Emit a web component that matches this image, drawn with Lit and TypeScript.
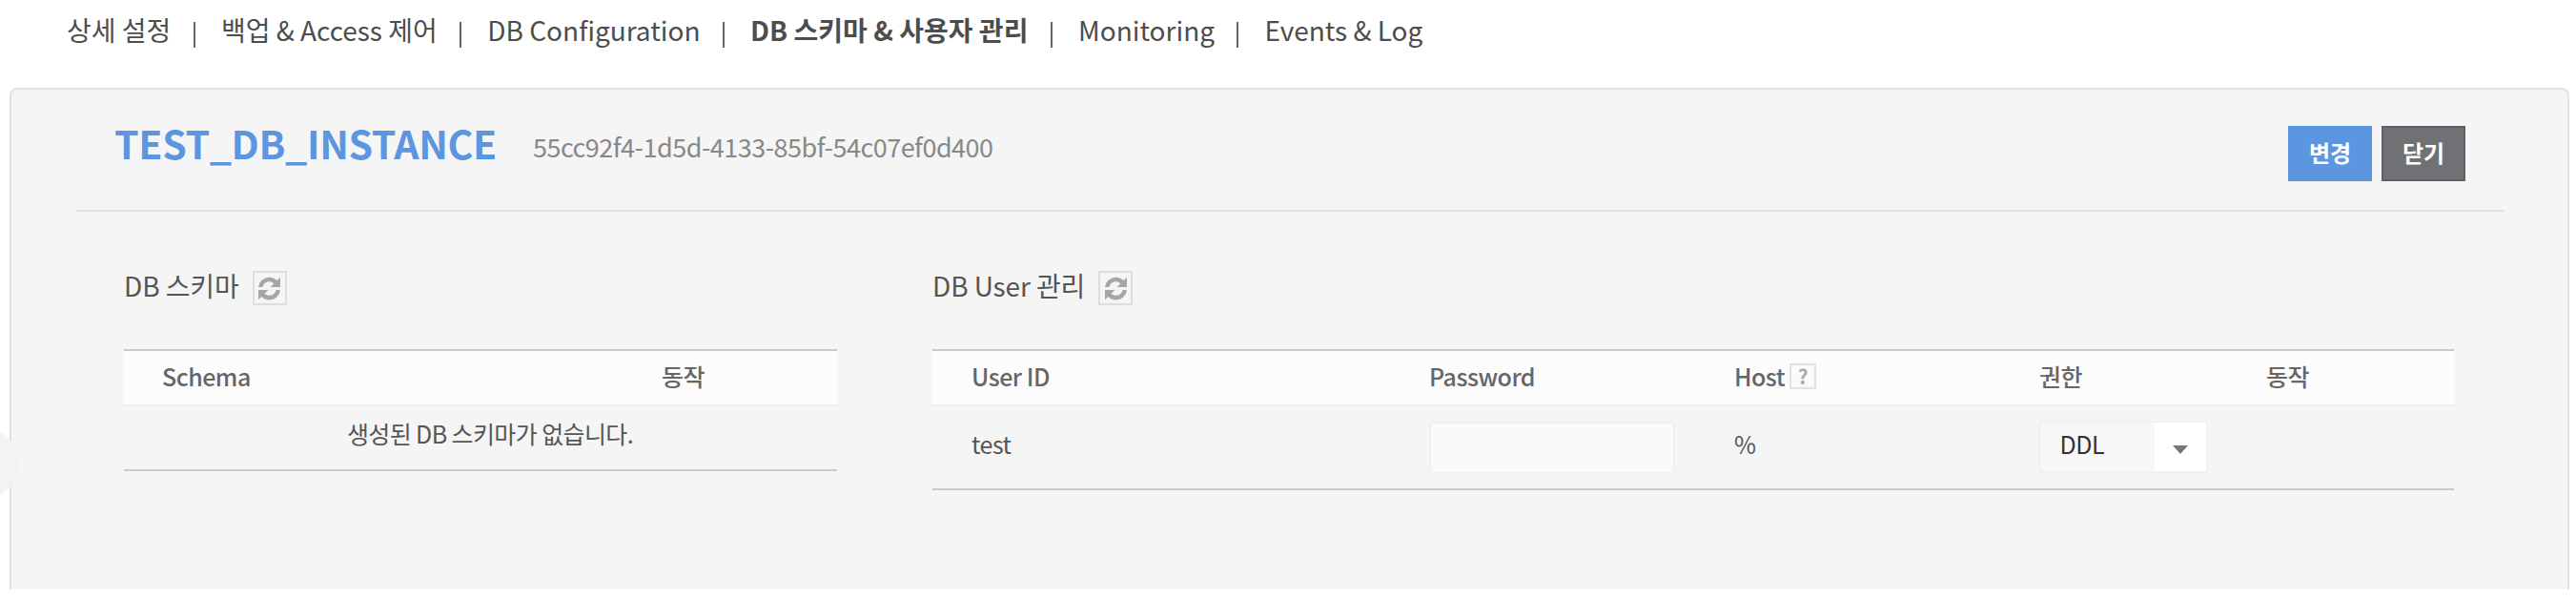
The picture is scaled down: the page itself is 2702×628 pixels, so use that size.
import { LitElement, html, css, svg } from "lit";
import { customElement } from "lit/decorators.js";

const refresh = svg`<svg class="ri" viewBox="0 0 24 24" width="29" height="29"><g fill="#a6a6a6"><path d="M2.500 10.800C3.300 5.600 7.200 2.200 12 2.200c2.700 0 5 1 6.700 2.800L21.500 2.200v8.600h-8.600l3.100-3.100C15 6.600 13.600 6 12 6 9 6 6.800 7.900 6.200 10.800z"/><path d="M21.500 13.200C20.700 18.400 16.800 21.800 12 21.800c-2.700 0-5-1-6.700-2.800L2.500 21.800v-8.600h8.600L8 16.300C9 17.400 10.400 18 12 18c3 0 5.200-1.900 5.800-4.800z"/></g></svg>`;

@customElement("app-root")
export class AppRoot extends LitElement {
  static styles = css`
    :host { display: block; width: 2702px; height: 628px; overflow: hidden; background: #fff; position: relative;
      font-family: "Noto Sans CJK KR", "Noto Sans", sans-serif; color: #555; font-size: 28px; letter-spacing: -0.5px; }
    .nav { display: flex; align-items: center; height: 62px; padding-left: 70px; color: #4d4d4d; letter-spacing: 0; }
    .nav a.b { font-weight: 700; }
    .sep { width: 2px; height: 27px; background: #666; margin: 10px 27.4px 0 23.2px; }
    .panel { box-sizing: border-box; margin: 30px 7px 0 10px; height: 526px; background: #f5f5f5;
      border: 2px solid #e2e2e2; border-bottom: none; border-radius: 8px 8px 0 0; padding: 0 66px 0 68px; position: relative; }
    .head { display: flex; align-items: center; height: 126px; border-bottom: 2px solid #e2e2e2; }
    .title { font-size: 41px; font-weight: 700; color: #5c96e0; margin-left: 40px; margin-bottom: 15px; letter-spacing: -0.35px; line-height: 1; }
    .uuid { font-size: 27px; color: #888; margin-left: 38px; margin-bottom: 8px; letter-spacing: -0.5px; }
    .btns { margin-left: auto; display: flex; gap: 10px; margin-right: 41px; margin-top: 8px; }
    .btn { box-sizing: border-box; width: 88px; height: 58px; display: flex; align-items: center; justify-content: center;
      color: #fff; font-size: 24px; font-weight: 700; letter-spacing: 0; padding-bottom: 4px; }
    .blue { background: #5c96e0; }
    .gray { background: #6f7175; border: 2px solid #5e6064; }
    .cols { display: flex; }
    .left { width: 748px; margin-left: 50px; }
    .right { width: 1596px; margin-left: 100px; }
    .h { display: flex; align-items: center; height: 36px; margin-top: 62px; margin-bottom: 46px; letter-spacing: -0.1px; }
    .h span { padding-bottom: 6px; }
    .rb { box-sizing: border-box; width: 36px; height: 36px; margin-left: 14px; border: 2px solid #dedede; display: flex; align-items: center; justify-content: center; }
    .ri { display: block; flex: none; }
    table { border-collapse: collapse; width: 100%; table-layout: fixed; border-top: 2px solid #ccc; border-bottom: 2px solid #ccc; }
    th { height: 58px; padding: 0 0 4px; background: #fcfcfc; border-bottom: 2px solid #eee; text-align: left; font-weight: 500; color: #666; font-size: 25px; box-sizing: border-box; }
    td { padding: 0; font-size: 25px; color: #555; box-sizing: border-box; }
    .q { display: inline-flex; box-sizing: border-box; vertical-align: 2px; width: 28px; height: 27px; margin-left: 5px; border: 2px solid #e2e2e2; background: #fafafa; color: #aaa; font-size: 21px; font-weight: 700; align-items: center; justify-content: center; letter-spacing: 0; }
    .empty { height: 68px; text-align: center; padding-left: 20px; padding-bottom: 10px; letter-spacing: -0.6px; }
    .urow td { height: 88px; }
    .urow .t { padding-bottom: 8px; }
    .input { box-sizing: border-box; width: 258px; height: 55px; background: #fafafa; border: 2px solid #f0f0f0; margin-top: 1px; }
    .select { box-sizing: border-box; width: 178px; height: 55px; border: 2px solid #f1f1f1; display: flex; background: #f7f7f7; margin: -1px 0 0 -1px; }
    .select .v { width: 120px; padding-left: 20.500px; box-sizing: border-box; color: #333; line-height: 45px; }
    .select .a { flex: 1; background: #fff; display: flex; align-items: center; justify-content: center; padding-top: 5px; }
    .arrow { width: 0; height: 0; border-left: 8px solid transparent; border-right: 8px solid transparent; border-top: 9px solid #777; }
    .tab { position: absolute; left: -68px; top: 354px; width: 76px; height: 76px; border-radius: 50%; background: #f3f3f3; }
  `;

  render() {
    const tabs = ["상세 설정", "백업 & Access 제어", "DB Configuration", "DB 스키마 & 사용자 관리", "Monitoring", "Events & Log"];
    return html`
      <nav class="nav">
        ${tabs.map((t, i) => html`${i ? html`<i class="sep"></i>` : ""}<a class=${i === 3 ? "b" : ""}>${t}</a>`)}
      </nav>
      <section class="panel">
        <div class="tab"></div>
        <header class="head">
          <div class="title">TEST_DB_INSTANCE</div>
          <div class="uuid">55cc92f4-1d5d-4133-85bf-54c07ef0d400</div>
          <div class="btns"><div class="btn blue">변경</div><div class="btn gray">닫기</div></div>
        </header>
        <div class="cols">
          <div class="left">
            <div class="h"><span>DB 스키마</span><div class="rb">${refresh}</div></div>
            <table>
              <colgroup><col style="width:564px" /><col /></colgroup>
              <tr><th style="padding-left:40px">Schema</th><th>동작</th></tr>
              <tr><td class="empty" colspan="2">생성된 DB 스키마가 없습니다.</td></tr>
            </table>
          </div>
          <div class="right">
            <div class="h"><span>DB User 관리</span><div class="rb">${refresh}</div></div>
            <table>
              <colgroup><col style="width:521px" /><col style="width:320px" /><col style="width:320px" /><col style="width:238px" /><col /></colgroup>
              <tr><th style="padding-left:41px">User ID</th><th>Password</th><th>Host<span class="q">?</span></th><th>권한</th><th>동작</th></tr>
              <tr class="urow">
                <td class="t" style="padding-left:41px">test</td>
                <td><div class="input"></div></td>
                <td class="t">%</td>
                <td><div class="select"><div class="v">DDL</div><div class="a"><div class="arrow"></div></div></div></td>
                <td></td>
              </tr>
            </table>
          </div>
        </div>
      </section>
    `;
  }
}
